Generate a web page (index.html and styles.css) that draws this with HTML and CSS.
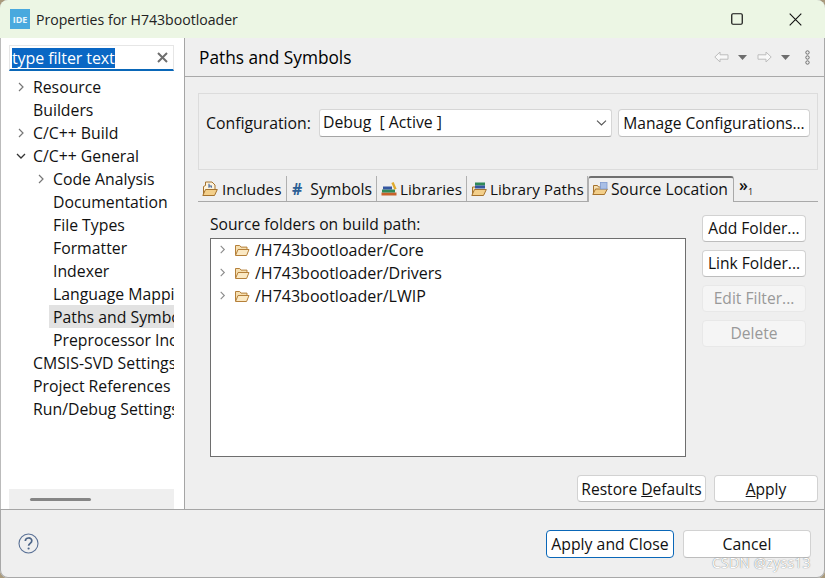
FILE: index.html
```html
<!DOCTYPE html>
<html lang="en">
<head>
<meta charset="utf-8">
<title>Properties for H743bootloader</title>
<link rel="stylesheet" href="styles.css">
</head>
<body>
<svg class="defs" width="0" height="0" aria-hidden="true">
  <defs>
    <symbol id="folder" viewBox="0 0 16 16">
      <path d="M1.5 13V3.5h4.2l1.3 1.6h6v2" fill="#f6dfb0" stroke="#b5803a"/>
      <path d="M1.5 13.5 4 7.5h11l-2.4 6z" fill="#fbe9c4" stroke="#b5803a" stroke-linejoin="round"/>
    </symbol>
    <symbol id="chev" viewBox="0 0 10 10">
      <path d="M3 1l4 4-4 4" fill="none" stroke="currentColor" stroke-width="1.2"/>
    </symbol>
    <symbol id="chevd" viewBox="0 0 10 10">
      <path d="M1 3l4 4 4-4" fill="none" stroke="currentColor" stroke-width="1.3"/>
    </symbol>
  </defs>
</svg>
<div class="window">
  <header class="titlebar">
    <span class="logo">IDE</span>
    <span class="title">Properties for H743bootloader</span>
    <span class="winbtn">
      <svg width="12" height="12" viewBox="0 0 12 12"><rect x="0.75" y="0.75" width="10.5" height="10.5" rx="1.2" fill="none" stroke="#111" stroke-width="1.2"/></svg>
    </span>
    <span class="winbtn">
      <svg width="13" height="13" viewBox="0 0 13 13"><path d="M.7.7l11.6 11.6M12.3.7.7 12.3" stroke="#111" stroke-width="1.1" fill="none"/></svg>
    </span>
  </header>

  <div class="body">
    <aside class="side">
      <div class="filter">
        <span class="filter-text">type filter text</span>
        <svg class="filter-x" width="11" height="11" viewBox="0 0 11 11"><path d="M1 1l9 9M10 1l-9 9" stroke="#6e6e6e" stroke-width="2" fill="none"/></svg>
      </div>
      <ul class="nav">
        <li class="nav-row l0"><svg class="tw"><use href="#chev"/></svg><span>Resource</span></li>
        <li class="nav-row l0"><i class="tw"></i><span>Builders</span></li>
        <li class="nav-row l0"><svg class="tw"><use href="#chev"/></svg><span>C/C++ Build</span></li>
        <li class="nav-row l0"><svg class="tw dark"><use href="#chevd"/></svg><span>C/C++ General</span></li>
        <li class="nav-row l1"><svg class="tw"><use href="#chev"/></svg><span>Code Analysis</span></li>
        <li class="nav-row l1"><i class="tw"></i><span>Documentation</span></li>
        <li class="nav-row l1"><i class="tw"></i><span>File Types</span></li>
        <li class="nav-row l1"><i class="tw"></i><span>Formatter</span></li>
        <li class="nav-row l1"><i class="tw"></i><span>Indexer</span></li>
        <li class="nav-row l1"><i class="tw"></i><span>Language Mappings</span></li>
        <li class="nav-row l1 sel"><i class="tw"></i><span>Paths and Symbols</span></li>
        <li class="nav-row l1"><i class="tw"></i><span>Preprocessor Include Paths</span></li>
        <li class="nav-row l0"><i class="tw"></i><span>CMSIS-SVD Settings</span></li>
        <li class="nav-row l0"><i class="tw"></i><span>Project References</span></li>
        <li class="nav-row l0"><i class="tw"></i><span>Run/Debug Settings</span></li>
      </ul>
      <div class="hscroll"><span class="thumb"></span></div>
    </aside>

    <main class="main">
      <div class="page-head">
        <h1 class="page-title">Paths and Symbols</h1>
        <div class="page-tools">
          <svg width="15" height="12" viewBox="0 0 15 12"><path d="M.8 6 6 1v2.8h8v4.4H6V11z" fill="#f8f8f8" stroke="#bdbdbd"/></svg>
          <svg class="drop" width="9" height="5" viewBox="0 0 9 5"><path d="M0 0h9L4.5 5z" fill="#6d6d6d"/></svg>
          <svg width="15" height="12" viewBox="0 0 15 12"><path d="M14.2 6 9 1v2.8H1v4.4h8V11z" fill="#f8f8f8" stroke="#bdbdbd"/></svg>
          <svg class="drop" width="9" height="5" viewBox="0 0 9 5"><path d="M0 0h9L4.5 5z" fill="#6d6d6d"/></svg>
          <svg class="dots" width="5" height="15" viewBox="0 0 5 15"><g fill="none" stroke="#6d6d6d"><circle cx="2.5" cy="2.5" r="1.7"/><circle cx="2.5" cy="7.5" r="1.7"/><circle cx="2.5" cy="12.5" r="1.7"/></g></svg>
        </div>
      </div>

      <div class="content">
        <section class="config">
          <label class="config-label">Configuration:</label>
          <div class="combo">
            <span class="combo-text">Debug&nbsp; [ Active ]</span>
            <svg width="11" height="6" viewBox="0 0 11 6"><path d="M1 .7l4.5 4.3L10 .7" fill="none" stroke="#555" stroke-width="1.1"/></svg>
          </div>
          <button class="btn manage">Manage Configurations...</button>
        </section>

        <nav class="tabs">
          <span class="tab tab-inc">
            <svg width="16" height="16" viewBox="0 0 16 16"><path d="M1.500 13.500V5.500l2-1v-3.500h6.500l3 3v4" fill="#fdf3dc" stroke="#a5722d"/><path d="M.8 14.500 3.500 8.500h11.800l-2.800 6z" fill="#f3cf8a" stroke="#a5722d" stroke-linejoin="round"/><path d="M7 2.800v4M7 5h2.300v1.800" fill="none" stroke="#3b5f9c" stroke-width="1.100"/></svg>
            Includes
          </span>
          <span class="tab tab-sym"><b class="hash">#</b> Symbols</span>
          <span class="tab tab-lib">
            <svg width="16" height="16" viewBox="0 0 16 16"><rect x="0.500" y="11.500" width="15" height="3" fill="#c8622a"/><rect x="1" y="8.500" width="13" height="3" fill="#2f8a58"/><rect x="2" y="5.500" width="9" height="3" fill="#3557a0"/><path d="M11.500 1.500l3 6.800" stroke="#e0aa2c" stroke-width="2.400"/></svg>
            Libraries
          </span>
          <span class="tab tab-path">
            <svg width="16" height="16" viewBox="0 0 16 16"><path d="M1.500 14V6h3" fill="#f6dfb0" stroke="#a5722d"/><rect x="4" y="1.500" width="10" height="3" fill="#2f8a58"/><rect x="4" y="4.500" width="10" height="3" fill="#3557a0"/><path d="M.8 14.500 3.500 8.500h11.800l-2.800 6z" fill="#f3cf8a" stroke="#a5722d" stroke-linejoin="round"/></svg>
            Library Paths
          </span>
          <span class="tab tab-src active">
            <svg width="16" height="16" viewBox="0 0 16 16"><path d="M1.500 13V4.500h4l1 1.500h3" fill="#f6dfb0" stroke="#a5722d"/><path d="M.8 13.500 3.500 8h11.800l-2.800 5.500z" fill="#f3cf8a" stroke="#a5722d" stroke-linejoin="round"/><rect x="8.500" y="1.500" width="6.500" height="6.500" fill="#a9bfe6" stroke="#7f9bd0" stroke-width=".8"/></svg>
            Source Location
          </span>
          <span class="tab-more">»<sub>1</sub></span>
        </nav>

        <section class="pane">
          <div class="pane-left">
            <p class="pane-label">Source folders on build path:</p>
            <div class="tree">
              <div class="tree-row"><svg class="tw2"><use href="#chev"/></svg><svg class="fold"><use href="#folder"/></svg>/H743bootloader/Core</div>
              <div class="tree-row"><svg class="tw2"><use href="#chev"/></svg><svg class="fold"><use href="#folder"/></svg>/H743bootloader/Drivers</div>
              <div class="tree-row"><svg class="tw2"><use href="#chev"/></svg><svg class="fold"><use href="#folder"/></svg>/H743bootloader/LWIP</div>
            </div>
          </div>
          <div class="pane-btns">
            <button class="btn side-btn">Add Folder...</button>
            <button class="btn side-btn">Link Folder...</button>
            <button class="btn side-btn off">Edit Filter...</button>
            <button class="btn side-btn off">Delete</button>
          </div>
        </section>

        <div class="page-actions">
          <button class="btn restore">Restore <u>D</u>efaults</button>
          <button class="btn apply"><u>A</u>pply</button>
        </div>
      </div>
    </main>
  </div>

  <footer class="footer">
    <svg class="help" width="21" height="21" viewBox="0 0 21 21"><circle cx="10.500" cy="10.500" r="9.500" fill="none" stroke="#5a7196" stroke-width="1.100"/><path d="M7.300 8c.2-4 6.500-4 6.500-.2 0 2.500-3.200 2.600-3.200 5" fill="none" stroke="#4d6588" stroke-width="1.700"/><circle cx="10.600" cy="15.500" r="1.100" fill="#4d6588"/></svg>
    <div class="footer-btns">
      <button class="btn foot default">Apply and Close</button>
      <button class="btn foot">Cancel</button>
    </div>
  </footer>
  <span class="watermark">CSDN @zyss13</span>
</div>
</body>
</html>
```

FILE: styles.css
```css
* { box-sizing: border-box; }
html, body { margin: 0; padding: 0; }
body {
  width: 825px;
  height: 578px;
  overflow: hidden;
  background: #a99a7c;
  font-family: "Open Sans", "Noto Sans", sans-serif;
  font-size: 15.8px;
  color: #111;
}
.defs { position: absolute; }
.window {
  position: relative;
  width: 825px;
  height: 578px;
  display: flex;
  flex-direction: column;
  background: #efefef;
  border-radius: 8px;
  overflow: hidden;
  box-shadow: inset 0 0 0 1px #a8a8a8;
}
.titlebar {
  flex: 0 0 38px;
  display: flex;
  align-items: center;
  padding-left: 10px;
  background: #ecf6e4;
}
.logo {
  width: 20px;
  height: 20px;
  display: flex;
  align-items: center;
  justify-content: center;
  background: #49a9de;
  color: #e8f5fc;
  font-size: 9px;
  font-weight: 700;
}
.title {
  flex: 1;
  margin-left: 6px;
  font-size: 14.1px;
  color: #222;
}
.winbtn {
  width: 58px;
  display: flex;
  justify-content: center;
}
.winbtn:last-child { margin-right: 1px; }

.body { flex: 0 0 471px; display: flex; }
.side {
  flex: 0 0 185px;
  width: 185px;
  min-width: 0;
  display: flex;
  flex-direction: column;
  padding: 7px 10px 0 8px;
  background: #fff;
  border-right: 1px solid #a5a5a5;
  border-left: 1px solid #bbb;
}
.filter {
  height: 26px;
  display: flex;
  align-items: center;
  justify-content: space-between;
  padding: 0 5px 0 2px;
  border: 1px solid #e6e6e6;
  border-bottom: 2px solid #0a67b8;
}
.filter-text {
  background: #0a67c4;
  color: #fff;
  line-height: 20px;
  font-size: 16px;
  letter-spacing: -.1px;
}
.nav {
  flex: 1;
  min-height: 0;
  margin: 4px 0 0;
  padding: 0;
  list-style: none;
  overflow: hidden;
}
.nav-row {
  height: 23px;
  display: flex;
  align-items: center;
  white-space: nowrap;
  overflow: hidden;
  color: #111;
}
.l0 { padding-left: 4px; }
.l1 { padding-left: 24px; }
.sel span {
  flex: 1;
  align-self: stretch;
  display: flex;
  align-items: center;
  margin-left: -4px;
  padding-left: 4px;
  background: #e2e2e2;
}
.tw {
  flex: 0 0 10px;
  width: 10px;
  height: 10px;
  margin-left: 3px;
  margin-right: 7px;
  color: #777;
}
.tw.dark { color: #333; }
.hscroll {
  flex: 0 0 20px;
  height: 20px;
  display: flex;
  align-items: center;
  padding-left: 21px;
  background: #efefef;
}
.thumb {
  width: 61px;
  height: 3px;
  border-radius: 2px;
  background: #858585;
}

.main { flex: 1; min-width: 0; display: flex; flex-direction: column; }
.page-head {
  flex: 0 0 39px;
  display: flex;
  align-items: center;
  justify-content: space-between;
  padding: 0 15px 0 14px;
  border-bottom: 1px solid #a9a9a9;
}
.page-title {
  margin: 1px 0 0;
  font-size: 17.3px;
  font-weight: 400;
  color: #000;
}
.page-tools { display: flex; align-items: center; gap: 9px; }
.drop { margin-right: 1px; }
.dots { margin-left: 5px; }

.content {
  flex: 1;
  display: flex;
  flex-direction: column;
  padding: 16px 7px 0 13px;
}
.config {
  flex: 0 0 77px;
  height: 77px;
  display: flex;
  align-items: flex-start;
  padding: 15px 7px 0;
  border: 1px solid #dcdcdc;
}
.config-label { width: 113px; line-height: 28px; }
.combo {
  width: 293px;
  height: 28px;
  margin-right: 6px;
  display: flex;
  align-items: center;
  justify-content: space-between;
  padding: 0 4px 0 3px;
  background: #fff;
  border: 1px solid #d6d6d6;
  border-bottom-color: #a5a5a5;
  border-radius: 3px;
}
.combo-text { margin-bottom: 2px; }
.btn {
  font: inherit;
  font-size: 15.6px;
  color: #111;
  background: #fff;
  border: 1px solid #d2d2d2;
  border-bottom-color: #bdbdbd;
  border-radius: 4px;
  padding: 0;
  height: 28px;
  white-space: nowrap;
}
.manage { width: 192px; }

.tabs {
  flex: 0 0 26px;
  height: 26px;
  margin-top: 6px;
  display: flex;
  align-items: stretch;
  border-bottom: 1px solid #a9a9a9;
  white-space: nowrap;
}
.tab {
  display: flex;
  align-items: center;
  gap: 3px;
  padding: 0 0 0 4px;
  border-right: 1px solid #b0b0b0;
  font-size: 15.3px;
}
.tab svg { flex: none; }
.tab-inc { width: 89px; gap: 4px; }
.tab-sym { width: 90px; font-size: 15.8px; }
.tab-lib { width: 90px; }
.tab-path { width: 121px; }
.tab-src { width: 146px; font-size: 15.7px; }
.hash { color: #2d5f95; font-weight: 700; padding: 0 5px 0 1px; }
.active {
  height: 26px;
  margin-bottom: -1px;
  padding-bottom: 2px;
  padding-left: 3px;
  background: #efefef;
  border-left: 1px solid #b0b0b0;
  border-right: 1px solid #a9a9a9;
  border-top: 2px solid #707070;
  border-radius: 3px 3px 0 0;
}
.tab-more { padding: 0 0 0 5px; font-size: 16px; line-height: 18px; font-weight: 600; }
.tab-more sub { font-size: 9px; font-weight: 400; vertical-align: -4px; line-height: 0; }

.pane {
  flex: 0 0 245px;
  display: flex;
  padding: 13px 0 0 12px;
}
.pane-left { width: 492px; }
.pane-label { margin: 0; height: 23px; line-height: 19px; font-size: 15.65px; }
.tree {
  width: 476px;
  height: 219px;
  background: #fff;
  border: 1px solid #6e6e6e;
}
.tree-row {
  height: 23px;
  display: flex;
  align-items: center;
  padding: 0 0 2px 7px;
  font-size: 16px;
}
.tw2 { width: 9px; height: 9px; color: #8b8b8b; margin-right: 7px; }
.fold { width: 16px; height: 16px; margin-right: 5px; }
.pane-btns { display: flex; flex-direction: column; gap: 8px; width: 104px; }
.side-btn { height: 27px; width: 104px; padding-bottom: 2px; }
.off { background: #f5f5f5; border-color: #e8e8e8; color: #999; }

.page-actions {
  display: flex;
  justify-content: flex-end;
  gap: 8px;
  margin-top: 18px;
}
.restore { width: 129px; height: 27px; }
.apply { width: 104px; height: 27px; }

.footer {
  flex: 1;
  display: flex;
  align-items: center;
  justify-content: space-between;
  padding: 0 14px 0 18px;
  border-top: 1px solid #a5a5a5;
}
.help { margin-bottom: 1px; }
.footer-btns { display: flex; gap: 9px; }
.foot { width: 128px; height: 28px; font-size: 15.8px; }
.default { border: 1px solid #0a67b8; }
.watermark {
  position: absolute;
  left: 712px;
  top: 553px;
  font-size: 14px;
  letter-spacing: .2px;
  color: #fff;
  text-shadow: 0 0 1px #555;
  white-space: nowrap;
}
```
